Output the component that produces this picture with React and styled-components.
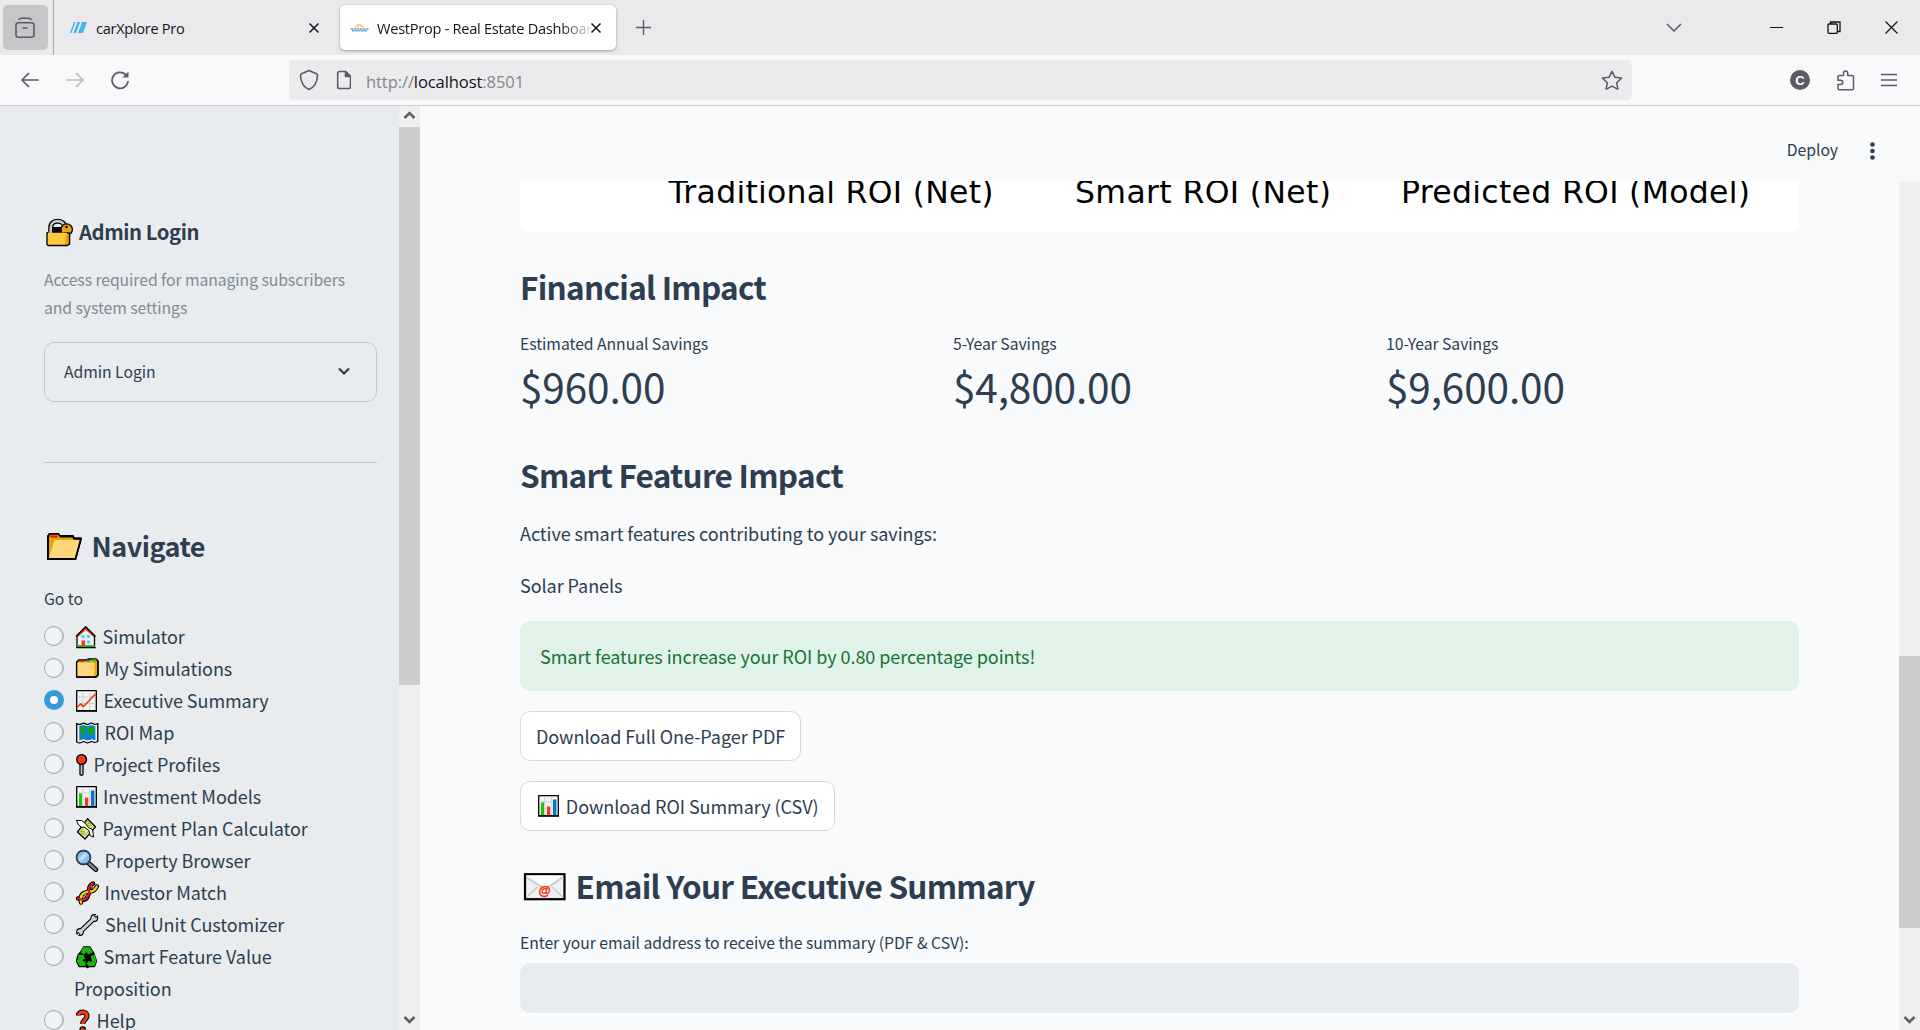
import React from "react";
import styled, { createGlobalStyle } from "styled-components";

const GlobalStyle = createGlobalStyle`
  * { box-sizing: border-box; }
  html, body { margin: 0; padding: 0; height: 100%; overflow: hidden; }
  body { font-family: "Noto Sans CJK SC", "Noto Sans", sans-serif; color: #2c3e50; letter-spacing: -0.05px; }
  svg { display: block; flex: none; }
  h1, h2, p { margin: 0; }
`;

const Window = styled.div`
  width: 1920px;
  height: 1030px;
  display: flex;
  flex-direction: column;
  background: #f8fafc;
  overflow: hidden;
`;

/* ---------- browser chrome ---------- */

const TabStrip = styled.div`
  height: 55px;
  flex: none;
  display: flex;
  align-items: center;
  background: #eaeaed;
  font-family: "Open Sans", "Noto Sans", sans-serif;
`;

const FirefoxView = styled.div`
  width: 45px;
  height: 45px;
  margin: 0 5px 0 3px;
  padding-right: 1px;
  border-radius: 5px;
  background: #c6c6c8;
  display: flex;
  align-items: center;
  justify-content: center;
`;

const Tab = styled.div`
  height: ${(p) => (p.$active ? "45px" : "55px")};
  width: ${(p) => (p.$active ? "276px" : "287px")};
  padding: 0 13px 0 ${(p) => (p.$active ? "10px" : "16px")};
  border-left: ${(p) => (p.$active ? "0" : "1px solid #a9a9ad")};
  border-radius: ${(p) => (p.$active ? "5px" : "0")};
  background: ${(p) => (p.$active ? "#fff" : "transparent")};
  box-shadow: ${(p) => (p.$active ? "0 1px 3px rgba(0,0,0,.35)" : "none")};
  display: flex;
  align-items: center;
`;

const TabTitle = styled.span`
  flex: 1;
  margin-left: ${(p) => p.$indent}px;
  font-size: 14.6px;
  letter-spacing: ${(p) => p.$tracking};
  line-height: 24px;
  color: #15141a;
  white-space: nowrap;
  overflow: hidden;
  mask-image: ${(p) => (p.$fade ? "linear-gradient(to right, #000 86%, rgba(0,0,0,.15))" : "none")};
`;

const Spacer = styled.div`
  flex: 1;
`;

const NewTab = styled.div`
  margin-left: 20px;
`;

const WindowControls = styled.div`
  display: flex;
  align-items: center;
  padding-right: 22px;
`;

const ControlIcon = styled.div`
  margin-right: ${(p) => p.$gap}px;
`;

const Toolbar = styled.div`
  height: 51px;
  flex: none;
  display: flex;
  align-items: center;
  padding: 0 22px 0 20px;
  background: #f9f9fb;
  border-bottom: 1px solid #cccccf;
`;

const NavButtons = styled.div`
  display: flex;
  gap: 25px;
  width: 269px;
`;

const UrlBar = styled.div`
  width: 1343px;
  height: 40px;
  border-radius: 5px;
  background: #ebebed;
  display: flex;
  align-items: center;
  padding: 0 9px 0 10px;
`;

const Url = styled.div`
  flex: 1;
  margin-left: 15px;
  padding-top: 2px;
  font-family: "Open Sans", "Noto Sans", sans-serif;
  font-size: 16.6px;
  letter-spacing: -0.12px;
  color: #86868a;
  b { font-weight: 400; color: #15141a; }
`;

const Extensions = styled.div`
  flex: 1;
  display: flex;
  justify-content: flex-end;
  align-items: center;
  gap: 26px;
`;

/* ---------- page ---------- */

const Page = styled.div`
  flex: 1;
  min-height: 0;
  display: flex;
`;

const Sidebar = styled.aside`
  width: 399px;
  flex: none;
  padding: 112px 22px 0 44px;
  background: #e8ecef;
  overflow: hidden;
`;

const Track = styled.div`
  width: 21px;
  flex: none;
  display: flex;
  flex-direction: column;
  justify-content: space-between;
  background: #f0f0f0;
`;

const Thumb = styled.div`
  height: ${(p) => p.$height}px;
  margin-top: ${(p) => p.$top}px;
  background: #cdcdcd;
`;

const Arrow = styled.div`
  height: 21px;
  padding-bottom: ${(p) => (p.$up ? "3px" : "0")};
  display: flex;
  align-items: center;
  justify-content: center;
`;

const SidebarTitle = styled.h2`
  display: flex;
  height: ${(p) => p.$line}px;
  line-height: ${(p) => p.$line}px;
  font-size: ${(p) => p.$size}px;
  font-weight: 600;
  letter-spacing: ${(p) => p.$tracking || "0"};
  white-space: nowrap;
`;

const Caption = styled.p`
  margin-top: 21px;
  padding-right: 12px;
  font-size: 15.75px;
  line-height: 28px;
  letter-spacing: -0.07px;
  color: #808b97;
`;

const Expander = styled.div`
  height: 60px;
  margin-top: 20px;
  padding: 0 26px 2px 19px;
  border: 1px solid #c5cace;
  border-radius: 10px;
  display: flex;
  align-items: center;
  justify-content: space-between;
  font-size: 15.75px;
`;

const Divider = styled.div`
  height: 1px;
  margin: 60px 0 65px;
  background: #c2c8cc;
`;

const FieldLabel = styled.div`
  margin-top: ${(p) => p.$top}px;
  font-size: 15.75px;
  line-height: 28px;
  white-space: nowrap;
`;

const RadioGroup = styled.div`
  margin-top: 7px;
  display: flex;
  flex-direction: column;
`;

const RadioRow = styled.label`
  display: flex;
  gap: 10px;
  padding-right: 20px;
  font-size: 18px;
  line-height: 32px;
  svg { display: inline-block; vertical-align: -5px; margin-right: 0.6px; }
`;

const RadioMark = styled.span`
  width: 20px;
  height: 20px;
  flex: none;
  margin-top: 6px;
  border-radius: 50%;
  border: ${(p) => (p.$checked ? "6.5px solid #3498db" : "1px solid #a3acb6")};
  background: ${(p) => (p.$checked ? "#fff" : "#f0f2f5")};
  box-shadow: ${(p) => (p.$checked ? "none" : "inset -1px 0 0 #b4bbc3")};
`;

const Main = styled.main`
  flex: 1;
  display: flex;
  flex-direction: column;
`;

const AppHeader = styled.header`
  height: 75px;
  flex: none;
  display: flex;
  align-items: center;
  justify-content: flex-end;
  gap: 32px;
  padding: 15px 45px 0 0;
  font-size: 15.75px;
  line-height: 24px;
`;

const DeployLabel = styled.span`
  padding-bottom: 2px;
`;

const ScrollArea = styled.div`
  flex: 1;
  min-height: 0;
  display: flex;
`;

const Content = styled.div`
  flex: 1;
  padding: 0 100px;
  overflow: hidden;
`;

const ChartCard = styled.div`
  height: 51px;
  border-radius: 0 0 10px 10px;
  background: #fff;
  overflow: hidden;
`;

const Heading = styled.h1`
  display: flex;
  margin-top: ${(p) => p.$top}px;
  height: 42px;
  line-height: 42px;
  font-size: 31.5px;
  font-weight: 600;
  letter-spacing: -0.72px;
  white-space: nowrap;
`;

const Metrics = styled.div`
  display: grid;
  grid-template-columns: repeat(3, 413px);
  gap: 20px;
  margin-top: 23px;
`;

const MetricLabel = styled.div`
  font-size: 15.75px;
  line-height: 28px;
`;

const MetricValue = styled.div`
  font-size: 40.5px;
  line-height: 56px;
  letter-spacing: -0.12px;
`;

const Paragraph = styled.p`
  margin-top: ${(p) => p.$top}px;
  font-size: 18px;
  line-height: 32px;
`;

const Alert = styled.div`
  height: 70px;
  margin-top: 20px;
  padding-left: 20px;
  border-radius: 10px;
  display: flex;
  align-items: center;
  background: #e1f3e8;
  color: #177233;
  font-size: 18px;
`;

const Button = styled.button`
  display: flex;
  align-items: center;
  width: ${(p) => p.$width}px;
  height: 50px;
  margin-top: 20px;
  padding: 0 0 0 15px;
  border: 1px solid #d5d9de;
  border-radius: 10px;
  background: #fff;
  color: inherit;
  font-family: inherit;
  font-size: 18px;
  letter-spacing: -0.05px;
  white-space: nowrap;
  svg { margin-right: 1.3px; }
`;

const TextInput = styled.div`
  height: 50px;
  margin-top: 6px;
  border-radius: 10px;
  background: #e8ecef;
`;

/* ---------- icons ---------- */

const Emoji = ({ w, h = 24, children }) => (
  <svg width={w} height={h} viewBox={`0 0 ${w} ${h}`} fill="none" stroke="#000" strokeWidth="1.3" strokeLinejoin="round">
    {children}
  </svg>
);

const Close = () => (
  <svg width="12" height="12" viewBox="0 0 12 12" stroke="#15141a" strokeWidth="1.5"><path d="M1.5 1.5l9 9M10.5 1.5l-9 9" /></svg>
);

const ScrollArrow = ({ up }) => (
  <svg width="13" height="10" viewBox="0 0 13 10" fill="none" stroke="#606060" strokeWidth="2.6">
    <path d={up ? "M1.5 8l5-5 5 5" : "M1.5 2l5 5 5-5"} />
  </svg>
);

const House = () => (
  <Emoji w={28}>
    <path d="M3 11L11.7 2.5 20.5 11V22H3z" fill="#f0f0f0" />
    <path d="M3 11.5L11.7 3.5l8.8 8" stroke="#f03a17" strokeWidth="2.2" />
    <path d="M2 11.5L11.7 1.7l9.8 9.8" />
    <path d="M3 21h18" stroke="#16c60c" strokeWidth="1.8" /><path d="M2.3 22.6h19.4" />
    <path d="M7.5 15.5h3.6V21H7.5z" fill="#f03a17" stroke="none" />
    <path d="M7.5 10h3v3h-3zM13 10h3v3h-3zM13 15.5h3v3h-3z" fill="#3fd4ff" stroke="none" />
  </Emoji>
);
const Dividers = () => (
  <Emoji w={30}>
    <path d="M2.6 5l2-2H12l2-1h8l2 2v14l-2 2H2.6z" fill="#eda400" />
    <path d="M3.3 5.6H20.5V19.4H3.3z" fill="#ffd679" stroke="none" />
    <path d="M5 4h5" stroke="#e81224" strokeWidth="1.8" /><path d="M12 3.6h4" stroke="#0078d7" strokeWidth="1.8" /><path d="M18 3.2h4" stroke="#16c60c" strokeWidth="2" />
    <path d="M2.6 5v15H22l2-2V4" />
  </Emoji>
);
const ChartBase = () => (
  <>
    <path d="M2.7 1.7h19.6v20H2.7z" fill="#f2f2f2" />
    <path d="M8.7 2.5v18.5M15.7 2.5v18.5M3.5 8h18M3.5 14.5h18" stroke="#cfcfcf" strokeWidth="1" />
    <path d="M2 22h21" strokeWidth="1.5" />
  </>
);
const ChartUp = () => (
  <Emoji w={29}><ChartBase /><path d="M3.5 18l3-3 3 2.5L21.5 5" stroke="#f03a17" strokeWidth="1.7" /></Emoji>
);
const BarChart = () => (
  <Emoji w={28.5}><ChartBase />
    <path d="M5 8.5h3V21H5z" fill="#16c60c" stroke="none" /><path d="M11 12.5h3.2V21H11z" fill="#f03a17" stroke="none" /><path d="M17 5.5h3.4V21H17z" fill="#0078d7" stroke="none" />
  </Emoji>
);
const WorldMap = () => (
  <Emoji w={30}>
    <path d="M2.7 2.7l3 1 4-1.5 3.8 1.5L17.5 2l3.3 1.5 3-1v18l-3 1-3.3-1-4 1.5-3.8-1.5-4 1.5-3-1z" fill="#f2f2f2" />
    <path d="M5.3 5.2l4-1.2 4.2 1.3 4.3-1.3 3.6 1.2v14l-3.6-1-4.3 1.2-4.2-1.2-4 1.2z" fill="#0f7fdc" stroke="none" />
    <path d="M6.5 6l5-.5 1 2-2.5 2-1.500 2 2.500 2-1 4.500-2-2.500-.5-4-1.500-2zM14 7l3-1.500 3.500 1v5.500l-1 1.500-2-2-.500 4-2-1.500-.500-3.500-1.500-1z" fill="#16a810" stroke="none" />
  </Emoji>
);
const Pin = () => (
  <Emoji w={19}>
    <path d="M6 11h3v10.5l-1.5 1-1.5-1z" fill="#d0d0d0" /><circle cx="7.6" cy="6.5" r="4.9" fill="#f03a17" />
  </Emoji>
);
const WingedMoney = () => (
  <Emoji w={28}>
    <path d="M13.5 1.8l8 8L11 22l-7.5-7z" fill="#e5ee8d" />
    <path d="M13.5 4.5l5 5L11 18.5l-4.5-4z" stroke="#a3ad3a" strokeWidth=".9" />
    <path d="M2.5 3.5h5l3 2 4 5 4 2 1 7.5-3.500-1.500-1-5-5-3.500-2 .5-3.500-2.500z" fill="#fff" strokeWidth="1" />
    <circle cx="9" cy="15.5" r="1.6" stroke="#8c9a20" strokeWidth="1" /><circle cx="15" cy="7.5" r="1.4" stroke="#8c9a20" strokeWidth="1" />
  </Emoji>
);
const Magnifier = () => (
  <Emoji w={30}>
    <path d="M15 14.5l6.7 6" stroke="#000" strokeWidth="5" strokeLinecap="round" /><path d="M14.5 14l7.2 6.5" stroke="#7a858e" strokeWidth="2.6" strokeLinecap="round" />
    <circle cx="9.5" cy="8.5" r="7" fill="#83bdec" /><path d="M5.5 11.5L12.5 4.5" stroke="#b5dcfa" strokeWidth="4" /><circle cx="9.5" cy="8.5" r="7" stroke="#30475b" strokeWidth="1.5" />
  </Emoji>
);
const strandA = "M4 17.5c5 2 8 1.5 9.5-1.5 1.5-3 2-4 1.5-7 0-4 2-5.5 4-6.500";
const strandB = "M7 21.5c-1-5 0-8 3-9.5s4-1.5 6.5-1.5c4 0 5-2.5 6.3-5";
const Dna = () => (
  <Emoji w={30}>
    <path d={strandA} strokeWidth="4.4" strokeLinecap="round" /><path d={strandB} strokeWidth="4.4" strokeLinecap="round" />
    <path d="M8 15l3 3M10 12.5l4 3.5M13 10l3 3M17 5l3 2.5" stroke="#3a96dd" strokeWidth="1.3" />
    <path d={strandB} stroke="#fcd800" strokeWidth="2.3" strokeLinecap="round" />
    <path d={strandA} stroke="#e81224" strokeWidth="2.3" strokeLinecap="round" />
  </Emoji>
);
const Wrench = () => (
  <Emoji w={30.5}>
    <path d="M6 19L20.5 5" strokeWidth="5.2" />
    <circle cx="6" cy="19" r="3.9" fill="#000" stroke="none" /><circle cx="20.3" cy="5" r="3.9" fill="#000" stroke="none" />
    <path d="M6 19L20.5 5" stroke="#cfcfcf" strokeWidth="3" />
    <circle cx="6" cy="19" r="2.8" fill="#cfcfcf" stroke="none" /><circle cx="20.3" cy="5" r="2.8" fill="#cfcfcf" stroke="none" />
    <path d="M5.2 20L3.5 22M21 4l1.8-2" strokeWidth="2.8" />
    <path d="M5 20.8L3 23M21.500 3.300L23.5 1" stroke="#e8ecef" strokeWidth="1.3" />
  </Emoji>
);
const Recycle = () => (
  <Emoji w={29}>
    <path d="M9.5 2h6.5l3.5 5.5L22.5 16l-2 5.5H15l-1.5 1.2-1.5-1.2H5L2.5 16 4 10l3-3.5z" fill="#000" />
    <path d="M9.2 2.2h6.8l3 5-4.500 2.300-2.300-2.500-2 2.500L6.800 7.500z" fill="#16b60c" stroke="none" />
    <path d="M16.500 11l4.300-1.500 1.700 6.500-2.300 5h-4.700v1l-3-3.500 3-3.200v1.200h2.500z" fill="#16b60c" stroke="none" />
    <path d="M3.500 9.500l6.500.5 1 4.500-1.700-.3-.8 2h3v4.800H5.500L2.800 16l1.700-3.500z" fill="#16b60c" stroke="none" />
  </Emoji>
);
const Question = () => (
  <Emoji w={22}>
    <path d="M4.500 6.500c0-4.500 8.500-4.500 8.500.3 0 4-4.300 3.700-4.300 8.200" stroke="#000" strokeWidth="5.2" />
    <path d="M4.500 6.500c0-4.500 8.500-4.500 8.500.3 0 4-4.300 3.700-4.300 8.200" stroke="#f03a17" strokeWidth="3.2" />
    <circle cx="8.7" cy="20.5" r="2.6" fill="#f03a17" />
  </Emoji>
);
const LockKey = () => (
  <Emoji w={35} h={30}>
    <path d="M6.7 16v-6.5c0-8.5 14-8.5 14 0V16" stroke="#000" strokeWidth="5" />
    <path d="M8.5 9h9v7h-9z" fill="#000" stroke="none" />
    <path d="M6.7 16v-6.5c0-8.5 14-8.5 14 0V16" stroke="#c8c8c8" strokeWidth="2.6" />
    <circle cx="22.7" cy="11.5" r="5.7" fill="#f0a30a" /><path d="M20 15h5.5v11H20z" fill="#f0a30a" />
    <path d="M3.6 14.7H23v12.6H3.6l-1-1.5V16z" fill="#ffc83d" stroke="none" />
    <path d="M22 16.5h3v9l-1 1.5h-3.5z" fill="#eda400" stroke="none" />
    <path d="M4 14.7H3v11.8l1 1h19.5l2-1.5v-9" /><circle cx="22.5" cy="9" r="1.3" fill="#000" stroke="none" />
  </Emoji>
);
const OpenFolder = () => (
  <Emoji w={47.5} h={36}>
    <path d="M4 10l1.3-4.2h9L16 8h13l1 2.5h7L31.5 31H4z" fill="#eda400" strokeWidth="1.8" />
    <path d="M10.5 12h25.7L30.8 30H5z" fill="#ffd679" stroke="none" />
    <path d="M6.5 8.5h7" stroke="#e81224" strokeWidth="2.2" />
    <path d="M16 8.5h13l1 2h7L31.5 31H4V7" strokeWidth="1.8" />
  </Emoji>
);

const Envelope = () => (
  <svg width="55.5" height="42" viewBox="0 0 55.5 42" fill="none">
    <rect x="5" y="10.2" width="39.5" height="25" fill="#f0f0f0" stroke="#000" strokeWidth="2.2" />
    <path d="M6.5 11.5h36.5L25 24z" fill="#fff" />
    <path d="M6.5 13.5L25 25l18-11.500M6.5 33.500l11-10.500M43 33.500L32 23" stroke="#cacaca" strokeWidth="1.6" />
    <circle cx="24.8" cy="27" r="4.5" fill="#fff" />
    <text x="24.7" y="30.5" textAnchor="middle" fontSize="12.5" fontWeight="700" fill="#f03a17" stroke="#f03a17" strokeWidth=".5" letterSpacing="0" fontFamily="Liberation Sans">@</text>
  </svg>
);

const pages = [
  ["Simulator", House], ["My Simulations", Dividers], ["Executive Summary", ChartUp], ["ROI Map", WorldMap],
  ["Project Profiles", Pin], ["Investment Models", BarChart], ["Payment Plan Calculator", WingedMoney],
  ["Property Browser", Magnifier], ["Investor Match", Dna], ["Shell Unit Customizer", Wrench],
  ["Smart Feature Value Proposition", Recycle], ["Help", Question],
];

const metrics = [
  ["Estimated Annual Savings", "$960.00"], ["5-Year Savings", "$4,800.00"], ["10-Year Savings", "$9,600.00"],
];

const BrowserChrome = () => (
  <>
    <TabStrip>
      <FirefoxView>
        <svg width="20" height="22" viewBox="0 0 20 22" fill="none" stroke="#5b5b66" strokeWidth="1.6" strokeLinecap="round">
          <path d="M4 2.5c.5-1 1-1.2 2-1.2h8c1 0 1.5.2 2 1.2" /><rect x="1" y="5.8" width="18" height="14.5" rx="2.5" /><path d="M8 11h4" />
        </svg>
      </FirefoxView>
      <Tab>
        <svg width="17" height="11" viewBox="0 0 17 11"><path d="M4 0h1.5L1.5 11H0zM7.5 0h2.7L6 11H3.5zM12 0h5l-4 11H8z" fill="#45b5ea" /></svg>
        <TabTitle $indent={9} $tracking="-0.3px">carXplore Pro</TabTitle>
        <ControlIcon $gap={7}><Close /></ControlIcon>
      </Tab>
      <Tab $active>
        <svg width="19" height="10" viewBox="0 0 19 10" fill="none">
          <path d="M5.5 4.5Q9.5-1.5 13.5 4.5M7 4l2.5-2L12 4" stroke="#f5cf72" strokeWidth="1.4" /><path d="M.5 6h18M2 7.8h15" stroke="#6f9fd0" strokeWidth="1.5" strokeDasharray="2.5 .6" />
        </svg>
        <TabTitle $fade $indent={8} $tracking="-0.27px">WestProp - Real Estate Dashboard</TabTitle>
        <ControlIcon $gap={1}><Close /></ControlIcon>
      </Tab>
      <NewTab>
        <svg width="15" height="15" viewBox="0 0 15 15" stroke="#5b5b66" strokeWidth="1.4"><path d="M7.5 0v15M0 7.5h15" /></svg>
      </NewTab>
      <Spacer />
      <WindowControls>
        <ControlIcon $gap={88}><svg width="16" height="9" viewBox="0 0 16 9" fill="none" stroke="#5b5b66" strokeWidth="1.5"><path d="M1 1l7 7 7-7" /></svg></ControlIcon>
        <ControlIcon $gap={44}><svg width="13" height="13" viewBox="0 0 13 13" stroke="#111"><path d="M0 6.5h13" /></svg></ControlIcon>
        <ControlIcon $gap={44}>
          <svg width="14" height="13" viewBox="0 0 14 13" fill="none" stroke="#111" strokeWidth="1.3"><rect x="1" y="3" width="9.3" height="9.3" rx="1" /><path d="M3.5 3V1h9.5v9.5h-2.5" /></svg>
        </ControlIcon>
        <svg width="13" height="13" viewBox="0 0 13 13" stroke="#111" strokeWidth="1.2"><path d="M.5.5l12 12M12.5.5l-12 12" /></svg>
      </WindowControls>
    </TabStrip>
    <Toolbar>
      <NavButtons>
        <svg width="20" height="20" viewBox="0 0 20 20" fill="none" stroke="#5b5b66" strokeWidth="1.7" strokeLinecap="round" strokeLinejoin="round"><path d="M18 10H2M8.5 3.5L2 10l6.5 6.5" /></svg>
        <svg width="20" height="20" viewBox="0 0 20 20" fill="none" stroke="#bdbdc2" strokeWidth="1.7" strokeLinecap="round" strokeLinejoin="round"><path d="M2 10h16M11.5 3.5L18 10l-6.5 6.5" /></svg>
        <svg width="20" height="20" viewBox="0 0 20 20" fill="none" stroke="#5b5b66" strokeWidth="1.7" strokeLinecap="round"><path d="M18 11.5A8 8 0 1 1 15.5 4.5L17 6" /><path d="M18.5 1.5v6h-6z" fill="#5b5b66" stroke="none" /></svg>
      </NavButtons>
      <UrlBar>
        <svg width="20" height="22" viewBox="0 0 20 22" fill="none" stroke="#5b5b66" strokeWidth="1.6" strokeLinejoin="round"><path d="M10 1.5l7.5 3.3c.8.4 1 1 1 1.7C18.3 13 15.5 18 10 20.5 4.5 18 1.7 13 1.5 6.5c0-.7.2-1.3 1-1.7z" /></svg>
        <svg width="32" height="20" viewBox="-17.5 0 32 20" fill="none" stroke="#5b5b66" strokeWidth="1.6" strokeLinejoin="round"><path d="M3 1.5h6L14 6.5v10.2c0 1-.7 1.8-1.7 1.8H3c-1 0-1.8-.8-1.8-1.8V3.3C1.2 2.3 2 1.5 3 1.5z" /><path d="M9 1.5v5h5z" fill="#5b5b66" /></svg>
        <Url>http://<b>localhost</b>:8501</Url>
        <svg width="22" height="21" viewBox="0 0 22 21" fill="none" stroke="#5b5b66" strokeWidth="1.5" strokeLinejoin="round"><path d="M11 1.3l2.9 5.9 6.6.9-4.8 4.6 1.2 6.6-5.9-3.2-5.9 3.2 1.2-6.6-4.8-4.6 6.6-.9z" /></svg>
      </UrlBar>
      <Extensions>
        <svg width="20" height="20" viewBox="0 0 20 20"><circle cx="10" cy="10" r="10" fill="#5b5b66" /><text x="10" y="14.8" textAnchor="middle" fontSize="13" fontWeight="700" fill="#fff" fontFamily="Liberation Sans">C</text></svg>
        <svg width="19" height="21" viewBox="0 0 19 21" fill="none" stroke="#5b5b66" strokeWidth="1.5" strokeLinejoin="round"><path d="M7.5 5.5V3.2c0-3 4.2-3 4.2 0v2.3h4.5c.8 0 1.3.5 1.3 1.3v11.7c0 .8-.5 1.3-1.3 1.3H3.3c-.8 0-1.3-.5-1.3-1.3v-4h2.5c3 0 3-4.3 0-4.3H2V6.8c0-.8.5-1.3 1.3-1.3z" /></svg>
        <svg width="17" height="16" viewBox="0 0 17 16" stroke="#5b5b66" strokeWidth="1.4"><path d="M0 2.5h16M0 8h16M0 13.5h16" /></svg>
      </Extensions>
    </Toolbar>
  </>
);

export default function App() {
  return (
    <Window>
      <GlobalStyle />
      <BrowserChrome />
      <Page>
        <Sidebar>
          <SidebarTitle $size={20.25} $line={27} $tracking="-0.42px"><LockKey />Admin Login</SidebarTitle>
          <Caption>Access required for managing subscribers and system settings</Caption>
          <Expander>
            Admin Login
            <svg width="12" height="9" viewBox="0 0 12 9" fill="none" stroke="#2c3e50" strokeWidth="2.2"><path d="M1 1.5l5 5 5-5" /></svg>
          </Expander>
          <Divider />
          <SidebarTitle $size={27} $line={36} $tracking="-0.5px"><OpenFolder />Navigate</SidebarTitle>
          <FieldLabel $top={21}>Go to</FieldLabel>
          <RadioGroup>
            {pages.map(([name, Icon]) => (
              <RadioRow key={name}>
                <RadioMark $checked={name === "Executive Summary"} />
                <span><Icon />{name}</span>
              </RadioRow>
            ))}
          </RadioGroup>
        </Sidebar>
        <Track>
          <div><Arrow $up><ScrollArrow up /></Arrow><Thumb $top={0} $height={558} /></div>
          <Arrow><ScrollArrow /></Arrow>
        </Track>
        <Main>
          <AppHeader>
            <DeployLabel>Deploy</DeployLabel>
            <svg width="5" height="18" viewBox="0 0 5 18" fill="#2c3e50"><circle cx="2.5" cy="2.5" r="2.3" /><circle cx="2.5" cy="9" r="2.3" /><circle cx="2.5" cy="15.5" r="2.3" /></svg>
          </AppHeader>
          <ScrollArea>
            <Content>
              <ChartCard>
                <svg width="1279" height="51" fontFamily="DejaVu Sans" fontSize="31.5" fill="#000" textAnchor="middle">
                  <text x="311" y="21.5" textLength="325">Traditional ROI (Net)</text>
                  <text x="683" y="21.5" textLength="256">Smart ROI (Net)</text>
                  <text x="1055.5" y="21.5" textLength="349">Predicted ROI (Model)</text>
                </svg>
              </ChartCard>
              <Heading $top={33}>Financial Impact</Heading>
              <Metrics>
                {metrics.map(([label, value]) => (
                  <div key={label}><MetricLabel>{label}</MetricLabel><MetricValue>{value}</MetricValue></div>
                ))}
              </Metrics>
              <Heading $top={39}>Smart Feature Impact</Heading>
              <Paragraph $top={22}>Active smart features contributing to your savings:</Paragraph>
              <Paragraph $top={20}>Solar Panels</Paragraph>
              <Alert>Smart features increase your ROI by 0.80 percentage points!</Alert>
              <Button $width={281}>Download Full One-Pager PDF</Button>
              <Button $width={315}><BarChart />Download ROI Summary (CSV)</Button>
              <Heading $top={33}><Envelope />Email Your Executive Summary</Heading>
              <FieldLabel $top={23}>Enter your email address to receive the summary (PDF &amp; CSV):</FieldLabel>
              <TextInput />
            </Content>
            <Track>
              <Thumb $top={475} $height={272} />
              <Arrow><ScrollArrow /></Arrow>
            </Track>
          </ScrollArea>
        </Main>
      </Page>
    </Window>
  );
}
